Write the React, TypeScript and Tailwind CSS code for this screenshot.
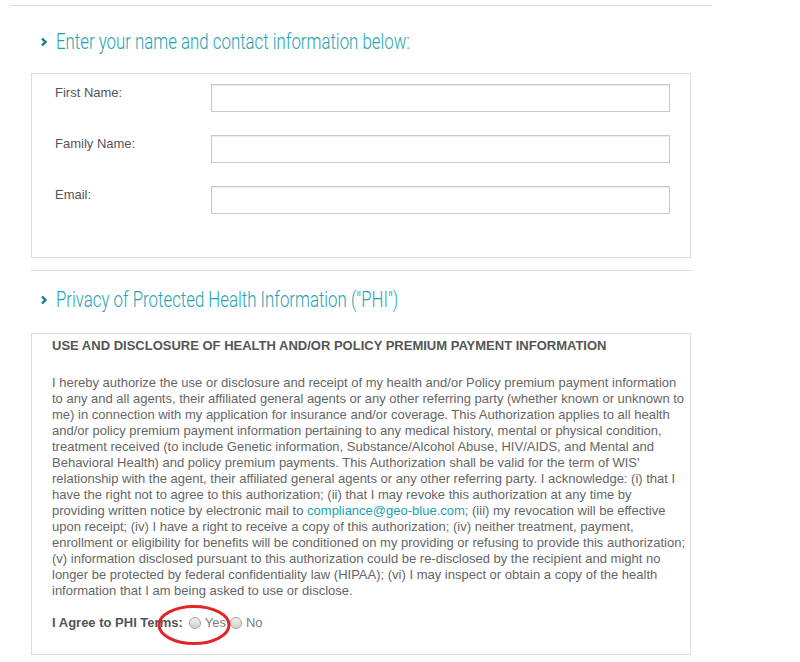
import React from 'react';

const FIELDS = ['First Name:', 'Family Name:', 'Email:'];

function Chevron() {
  return (
    <svg width="8" height="10" viewBox="0 0 8 10" className="shrink-0">
      <polyline points="2,1.5 5.5,5 2,8.5" fill="none" stroke="#127f8d" strokeWidth="2.4" />
    </svg>
  );
}

function SectionHeading({ children }: { children: React.ReactNode }) {
  return (
    <div className="flex items-center h-[26px] pl-[9px]">
      <Chevron />
      <span className="ml-[8px] whitespace-nowrap font-['Roboto',sans-serif] font-light text-[22px] leading-[26px] text-[#1ea3b3] inline-block origin-left scale-x-[0.765]">
        {children}
      </span>
    </div>
  );
}

function Radio() {
  return (
    <span className="inline-block w-[12px] h-[12px] rounded-full border border-[#a4a4a4] bg-gradient-to-b from-[#f2f2f2] to-[#cfcfcf]" />
  );
}

export default function App() {
  return (
    <div className="relative w-[800px] h-[662px] bg-white overflow-hidden pt-[5px] font-['Liberation_Sans',Arial,sans-serif]">
      <div className="ml-[10px] w-[702px] h-px bg-[#dddddd]" />

      <div className="ml-[31px] w-[660px]">
        <div className="mt-[23px]">
          <SectionHeading>Enter your name and contact information below:</SectionHeading>
        </div>

        {/* Contact box */}
        <div className="mt-[18px] h-[185px] border border-[#dcdcdc] pt-[10px] pl-[23px] flex flex-col gap-[23px]">
          {FIELDS.map((f) => (
            <div key={f} className="flex items-start">
              <label className="w-[156px] pt-[1px] text-[13px] leading-[16px] text-[#555]">{f}</label>
              <input
                type="text"
                className="w-[459px] h-[28px] border border-[#c9c9c9] shadow-[inset_0_1px_1px_rgba(0,0,0,0.08)] outline-none"
              />
            </div>
          ))}
        </div>

        <div className="mt-[12px] w-[662px] h-px bg-[#dddddd]" />

        <div className="mt-[16px]">
          <SectionHeading>Privacy of Protected Health Information ("PHI")</SectionHeading>
        </div>

        {/* PHI box */}
        <div className="mt-[20px] h-[322px] border border-[#dcdcdc] pl-[20px] pr-[6px] pt-[4px] text-[13px] leading-[16px]">
          <h3 className="font-bold text-[#555] whitespace-nowrap">
            USE AND DISCLOSURE OF HEALTH AND/OR POLICY PREMIUM PAYMENT INFORMATION
          </h3>
          <p className="mt-[21px] text-[#666] whitespace-nowrap">
            I hereby authorize the use or disclosure and receipt of my health and/or Policy premium payment information<br />
            to any and all agents, their affiliated general agents or any other referring party (whether known or unknown to<br />
            me) in connection with my application for insurance and/or coverage. This Authorization applies to all health<br />
            and/or policy premium payment information pertaining to any medical history, mental or physical condition,<br />
            treatment received (to include Genetic information, Substance/Alcohol Abuse, HIV/AIDS, and Mental and<br />
            Behavioral Health) and policy premium payments. This Authorization shall be valid for the term of WIS'<br />
            relationship with the agent, their affiliated general agents or any other referring party. I acknowledge: (i) that I<br />
            have the right not to agree to this authorization; (ii) that I may revoke this authorization at any time by<br />
            providing written notice by electronic mail to{' '}
            <a className="text-[#1a9fb0]">compliance@geo-blue.com</a>; (iii) my revocation will be effective<br />
            upon receipt; (iv) I have a right to receive a copy of this authorization; (iv) neither treatment, payment,<br />
            enrollment or eligibility for benefits will be conditioned on my providing or refusing to provide this authorization;<br />
            (v) information disclosed pursuant to this authorization could be re-disclosed by the recipient and might no<br />
            longer be protected by federal confidentiality law (HIPAA); (vi) I may inspect or obtain a copy of the health<br />
            information that I am being asked to use or disclose.
          </p>
          <div className="mt-[16px] flex items-center text-[#555]">
            <span className="font-bold">I Agree to PHI Terms:</span>
            <span className="ml-[6px] flex items-center gap-[4px]">
              <Radio />
              <span className="text-[#808080]">Yes</span>
            </span>
            <span className="ml-[4px] flex items-center gap-[4px]">
              <Radio />
              <span className="text-[#808080]">No</span>
            </span>
          </div>
        </div>
      </div>

      {/* red annotation ring */}
      <svg className="absolute left-[156px] top-[604px]" width="76" height="42" viewBox="0 0 76 42">
        <ellipse cx="38" cy="21" rx="35" ry="18.5" fill="none" stroke="#e1262a" strokeWidth="3" />
      </svg>
    </div>
  );
}
